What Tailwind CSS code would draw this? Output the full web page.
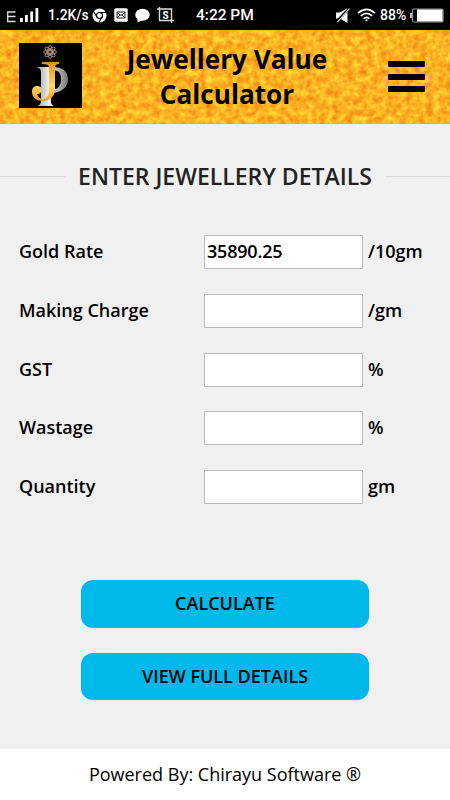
<!DOCTYPE html>
<html lang="en">
<head>
    <meta charset="UTF-8">
    <meta name="viewport" content="width=device-width, initial-scale=1.0">
    <title>Jewellery Value Calculator</title>
    <script src="https://cdn.jsdelivr.net/npm/@tailwindcss/browser@4"></script>
</head>
<body class="flex flex-col bg-[#f0f0f0] h-[800px] overflow-hidden font-['Open_Sans','Noto_Sans',sans-serif] text-black">
    <!-- Status bar -->
    <div class="flex items-center bg-black h-[30px] shrink-0 text-white font-['Roboto',sans-serif]">
        <svg class="ml-[7px] w-[33px] h-[30px] shrink-0" viewBox="0 0 33 30" fill="#fff">
            <path d="M0 12H8.500M1 16.500H8.500M0 21.500H8.500M.7 12V22" fill="none" stroke="#ddd" stroke-width="1.300"/>
            <path d="M13 18h2.800v4H13zM18 15h2.800v7H18zM23.300 11.500h2.800V22h-2.800zM28.500 8h2.800v14h-2.800z"/>
        </svg>
        <span class="ml-[8px] w-[41px] text-[13.800px] leading-[32px] font-medium whitespace-nowrap">1.2K/s</span>
        <svg class="ml-[3px] w-[15px] h-[15px] shrink-0" viewBox="0 0 15 15">
            <circle cx="7.500" cy="7.500" r="7" fill="#fff"/>
            <circle cx="7.500" cy="7.500" r="3" fill="#fff" stroke="#000" stroke-width="1.100"/>
            <path d="M7.500 4.500H14M4.900 9L1.700 3.600M10.100 9L7 14.300" stroke="#000" stroke-width="1.100"/>
        </svg>
        <svg class="ml-[7px] w-[14px] h-[14px] shrink-0" viewBox="0 0 14 14">
            <rect x=".3" y=".3" width="13.400" height="13.400" rx="1.500" fill="#fff"/>
            <path d="M3 4h8v6H3zM3 4.500l4 3 4-3M3 10l3-3M11 10L8 7" fill="none" stroke="#222" stroke-width="1"/>
        </svg>
        <svg class="ml-[7px] w-[15px] h-[15px] shrink-0" viewBox="0 0 15 15" fill="#fff">
            <ellipse cx="7.500" cy="6.800" rx="7.300" ry="6"/>
            <path d="M2.500 10v4.500L7.500 12z"/>
        </svg>
        <svg class="ml-[7px] w-[17px] h-[16px] shrink-0" viewBox="0 0 17 16">
            <path d="M0 2h14.500v14M2.500 0v13.500H17" fill="none" stroke="#ddd" stroke-width="1.400"/>
            <text x="8.500" y="11.500" fill="#fff" font-size="10" font-weight="700" text-anchor="middle">S</text>
        </svg>
        <span class="ml-[22px] w-[60px] text-[15.500px] leading-[32px] font-medium whitespace-nowrap">4:22 PM</span>
        <svg class="ml-[80px] w-[14px] h-[15px] shrink-0" viewBox="0 0 14 15">
            <path d="M0 4.500h4L11.500 0v15L4 10.500H0z" fill="#fff"/>
            <path d="M13.500 0L0 14.500" stroke="#000" stroke-width="2.600"/>
            <path d="M13.500 .5L1.500 14" stroke="#fff" stroke-width="1.100"/>
        </svg>
        <svg class="ml-[7px] w-[19px] h-[14px] shrink-0" viewBox="0 0 20 14" fill="none" stroke="#fff" stroke-width="1.700">
            <path d="M1 5Q10-3 19 5M4 8Q10 2.500 16 8M7 10.800Q10 8 13 10.800"/>
            <circle cx="10" cy="12.600" r="1.200" fill="#fff" stroke="none"/>
        </svg>
        <span class="ml-[4px] w-[28px] text-[14px] leading-[32px] font-medium whitespace-nowrap">88%</span>
        <svg class="ml-[2px] w-[34px] h-[15px] shrink-0" viewBox="0 0 34 15">
            <path d="M0 5h2v5H0z" fill="#bbb"/>
            <rect x="2.500" y="1" width="30.500" height="13" rx="1.500" fill="#000" stroke="#999" stroke-width="1.200"/>
            <path d="M7 1.500h25.500v12H7z" fill="#fff"/>
        </svg>
    </div>

    <!-- Header -->
    <header class="relative h-[94px] shrink-0 bg-[#ffb524]">
        <svg class="absolute inset-0 w-full h-full" aria-hidden="true">
            <filter id="gold" x="0" y="0" width="100%" height="100%" color-interpolation-filters="sRGB">
                <feTurbulence type="fractalNoise" baseFrequency="0.150" numOctaves="3" seed="8"/>
                <feColorMatrix values="0.100 0 0 0 0.930  0.520 0 0 0 0.440  0.220 0 0 0 0.030  0 0 0 0 1"/>
            </filter>
            <rect width="100%" height="100%" filter="url(#gold)"/>
        </svg>
        <div class="relative flex items-start h-full">
            <svg class="mt-[13px] ml-[19px] w-[63px] h-[65px] shrink-0" viewBox="0 0 63 65">
                <defs>
                    <linearGradient id="silver" x1="0" x2="1">
                        <stop offset="0" stop-color="#999"/>
                        <stop offset=".4" stop-color="#eee"/>
                        <stop offset="1" stop-color="#777"/>
                    </linearGradient>
                    <linearGradient id="amber" x1="0" y1="0" x2="0" y2="1">
                        <stop offset="0" stop-color="#e98f10"/>
                        <stop offset=".6" stop-color="#ffd76a"/>
                        <stop offset="1" stop-color="#f0a020"/>
                    </linearGradient>
                </defs>
                <rect width="63" height="65" fill="#000"/>
                <!-- Flower ornament -->
                <g fill="none" stroke="#c9a58c" stroke-width=".8">
                    <circle cx="31" cy="9" r="1.500"/>
                    <ellipse cx="31" cy="9" rx="2.300" ry="6.500"/>
                    <ellipse cx="31" cy="9" rx="2.300" ry="6.500" transform="rotate(45 31 9)"/>
                    <ellipse cx="31" cy="9" rx="2.300" ry="6.500" transform="rotate(90 31 9)"/>
                    <ellipse cx="31" cy="9" rx="2.300" ry="6.500" transform="rotate(135 31 9)"/>
                </g>
                <!-- P behind, J in front -->
                <path d="M17 24H34C43 24 49 28 49 36S43 49 34 50V47C39 46 42 43 42 36S39 27 32 27V58Q32 62 35 63H18Q22 62 22 58V29Q22 25 17 24z" fill="url(#silver)"/>
                <path d="M23 19H40V21Q36 21 36 24V46C36 54 30 58 24 58C17 58 13 54 13 49C13 45 15 43 18 43C22 43 24 46 22 49C21 51 19 51 18 51C19 54 21 56 24 56C28 56 30 52 30 46V24Q30 21 23 21z" fill="url(#amber)"/>
            </svg>
            <h1 class="mt-[12px] ml-[29px] w-[232px] text-center text-[26.200px] leading-[35px] font-bold">Jewellery Value<br>Calculator</h1>
            <button class="flex flex-col gap-[6.500px] mt-[31px] ml-[45px]" aria-label="Menu">
                <span class="bg-black rounded-[1px] w-[37px] h-[6px]"></span>
                <span class="bg-black rounded-[1px] w-[37px] h-[6px]"></span>
                <span class="bg-black rounded-[1px] w-[37px] h-[6px]"></span>
            </button>
        </div>
    </header>

    <!-- Form -->
    <main class="flex flex-col grow">
        <div class="flex items-center mt-[35px] h-[34px]">
            <div class="bg-[#d9d9d9] mt-px w-[65px] h-px"></div>
            <h2 class="w-[320px] text-center text-[#222] text-[23px] leading-[34px] font-semibold whitespace-nowrap">ENTER JEWELLERY DETAILS</h2>
            <div class="bg-[#d9d9d9] mt-px w-[65px] h-px"></div>
        </div>

        <div class="flex flex-col gap-[24.750px] mt-[42px] pl-[19px] text-[18px] leading-[32px] font-semibold">
            <div class="flex h-[34px]">
                <label class="w-[185px]">Gold Rate</label>
                <input class="bg-white px-[2px] pb-[2px] border border-[#bbb] w-[159px] h-[34px] tracking-[-0.200px]" value="35890.25">
                <span class="ml-[5px]">/10gm</span>
            </div>
            <div class="flex h-[34px]">
                <label class="w-[185px]">Making Charge</label>
                <input class="bg-white px-[2px] border border-[#bbb] w-[159px] h-[34px]">
                <span class="ml-[5px]">/gm</span>
            </div>
            <div class="flex h-[34px]">
                <label class="w-[185px]">GST</label>
                <input class="bg-white px-[2px] border border-[#bbb] w-[159px] h-[34px]">
                <span class="ml-[5px]">%</span>
            </div>
            <div class="flex h-[34px]">
                <label class="w-[185px]">Wastage</label>
                <input class="bg-white px-[2px] border border-[#bbb] w-[159px] h-[34px]">
                <span class="ml-[5px]">%</span>
            </div>
            <div class="flex h-[34px]">
                <label class="w-[185px]">Quantity</label>
                <input class="bg-white px-[2px] border border-[#bbb] w-[159px] h-[34px]">
                <span class="ml-[5px]">gm</span>
            </div>
        </div>

        <div class="flex flex-col items-center gap-[25px] mt-[76px] text-[18px] font-semibold">
            <button class="bg-[#00b9eb] pb-px rounded-[12px] w-[288px] h-[47.500px]">CALCULATE</button>
            <button class="bg-[#00b9eb] rounded-[12px] w-[288px] h-[47.500px]">VIEW FULL DETAILS</button>
        </div>
    </main>

    <footer class="bg-white h-[51px] shrink-0 text-center text-[18px] leading-[50px] font-medium">Powered By: Chirayu Software ®</footer>
</body>
</html>
